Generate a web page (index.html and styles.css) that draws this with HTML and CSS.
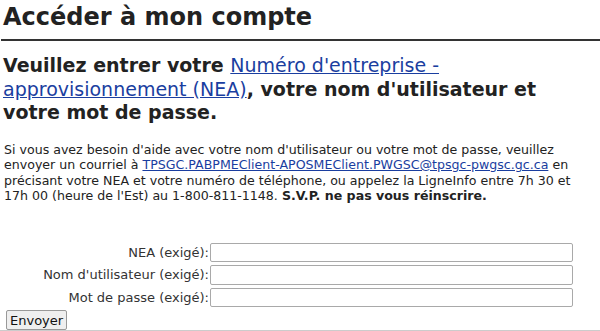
FILE: index.html
```html
<!DOCTYPE html>
<html lang="fr">
<head>
<meta charset="utf-8">
<title>Accéder à mon compte</title>
<link rel="stylesheet" href="styles.css">
</head>
<body>
<h1 class="title">Accéder à mon compte</h1>
<hr class="rule">
<h2 class="lead">Veuillez entrer votre <a href="#">Numéro d'entreprise - approvisionnement (NEA)</a>, votre nom d'utilisateur et<br>votre mot de passe.</h2>
<p class="help">Si vous avez besoin d'aide avec votre nom d'utilisateur ou votre mot de passe, veuillez<br>envoyer un courriel à <a href="#">TPSGC.PABPMEClient-APOSMEClient.PWGSC@tpsgc-pwgsc.gc.ca</a> en<br>précisant votre NEA et votre numéro de téléphone, ou appelez la LigneInfo entre 7h 30 et<br>17h 00 (heure de l'Est) au 1-800-811-1148. <strong>S.V.P. ne pas vous réinscrire.</strong></p>
<form class="login">
  <div class="row"><label class="lbl" for="nea">NEA (exigé):</label><input class="field" id="nea" type="text"></div>
  <div class="row"><label class="lbl" for="user">Nom d'utilisateur (exigé):</label><input class="field" id="user" type="text"></div>
  <div class="row"><label class="lbl" for="pw">Mot de passe (exigé):</label><input class="field" id="pw" type="password"></div>
  <button class="submit" type="button">Envoyer</button>
</form>
<hr class="foot">
</body>
</html>
```
FILE: styles.css
```css
html, body {
  margin: 0;
  padding: 0;
  background: #fff;
}
body {
  padding: 0 0 0 3px;
  color: #222;
  font-family: "DejaVu Sans", Verdana, sans-serif;
  overflow: hidden;
}
.title {
  margin: 0;
  padding-top: 2px;
  font-size: 24px;
  line-height: 30px;
  font-weight: bold;
  color: #222;
}
.rule {
  margin: 7px 0 0 -2px;
  border: 0;
  height: 2px;
  background: #333;
}
.lead {
  margin: 13px 0 0 0;
  font-size: 19px;
  line-height: 23.5px;
  font-weight: bold;
  color: #222;
}
.lead a {
  font-weight: normal;
  color: #1a3ea0;
}
.help {
  margin: 17px 0 0 1px;
  font-size: 12.6px;
  line-height: 15.5px;
  color: #222;
  white-space: nowrap;
}
.help a {
  color: #1a3ea0;
}
.login {
  margin-top: 39px;
  font-size: 13px;
}
.row {
  display: flex;
  align-items: center;
  margin-bottom: 3px;
}
.lbl {
  width: 206px;
  text-align: right;
  padding-right: 1px;
  color: #333;
}
.field {
  width: 363px;
  height: 19.5px;
  box-sizing: border-box;
  border: 1px solid #a9a9a9;
  border-radius: 2px;
  margin: 0;
  padding: 0 2px;
}
.submit {
  margin: 0 0 0 3px;
  height: 20px;
  padding: 0 3px;
  font-family: "DejaVu Sans", sans-serif;
  font-size: 13px;
  border: 1px solid #999;
  border-radius: 2px;
  background: #efefef;
  color: #111;
}
.foot {
  margin: 0 0 0 -3px;
  border: 0;
  height: 1px;
  background: #ccc;
}
```
